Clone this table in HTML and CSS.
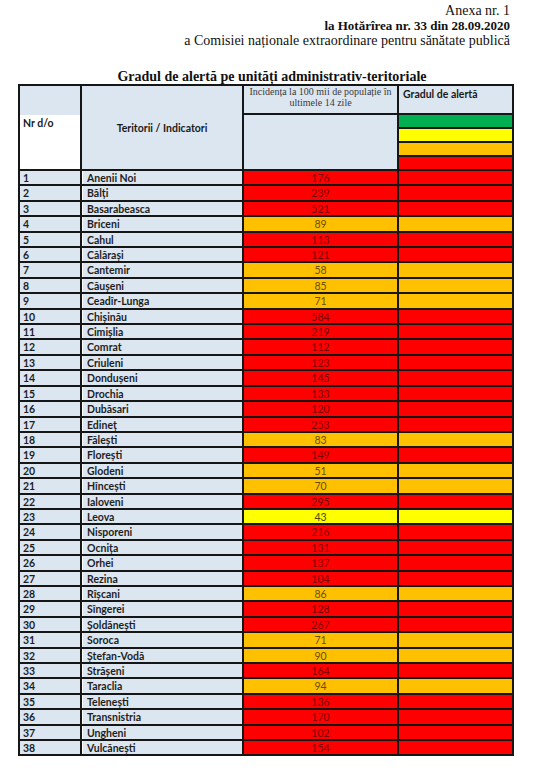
FILE: index.html
```html
<!DOCTYPE html>
<html lang="ro">
<head>
<meta charset="utf-8">
<title>Anexa nr. 1</title>
<link rel="stylesheet" href="styles.css">
</head>
<body>
<div class="page">
  <div class="annex">
    <div>Anexa nr. 1</div>
    <div class="b">la Hotărîrea nr. 33 din 28.09.2020</div>
    <div>a Comisiei naționale extraordinare pentru sănătate publică</div>
  </div>
  <h1 class="title">Gradul de alertă pe unități administrativ-teritoriale</h1>
  <div class="grid">
    <div class="h-nr"><span>Nr d/o</span></div>
    <div class="h-ter">Teritorii / Indicatori</div>
    <div class="h-inc">Incidența la 100 mii de populație în<br>ultimele 14 zile</div>
    <div class="h-grad">Gradul de alertă</div>
    <div class="h-inc2"></div>
    <div class="lv green"></div>
    <div class="lv yellow"></div>
    <div class="lv orange"></div>
    <div class="lv red"></div>

    <div class="nr">1</div><div class="nm">Anenii Noi</div><div class="val r">176</div><div class="al r"></div>
    <div class="nr">2</div><div class="nm">Bălți</div><div class="val r">239</div><div class="al r"></div>
    <div class="nr">3</div><div class="nm">Basarabeasca</div><div class="val r">521</div><div class="al r"></div>
    <div class="nr">4</div><div class="nm">Briceni</div><div class="val o">89</div><div class="al o"></div>
    <div class="nr">5</div><div class="nm">Cahul</div><div class="val r">113</div><div class="al r"></div>
    <div class="nr">6</div><div class="nm">Călărași</div><div class="val r">121</div><div class="al r"></div>
    <div class="nr">7</div><div class="nm">Cantemir</div><div class="val o">58</div><div class="al o"></div>
    <div class="nr">8</div><div class="nm">Căușeni</div><div class="val o">85</div><div class="al o"></div>
    <div class="nr">9</div><div class="nm">Ceadîr-Lunga</div><div class="val o">71</div><div class="al o"></div>
    <div class="nr">10</div><div class="nm">Chișinău</div><div class="val r">584</div><div class="al r"></div>
    <div class="nr">11</div><div class="nm">Cimișlia</div><div class="val r">219</div><div class="al r"></div>
    <div class="nr">12</div><div class="nm">Comrat</div><div class="val r">112</div><div class="al r"></div>
    <div class="nr">13</div><div class="nm">Criuleni</div><div class="val r">123</div><div class="al r"></div>
    <div class="nr">14</div><div class="nm">Dondușeni</div><div class="val r">145</div><div class="al r"></div>
    <div class="nr">15</div><div class="nm">Drochia</div><div class="val r">133</div><div class="al r"></div>
    <div class="nr">16</div><div class="nm">Dubăsari</div><div class="val r">120</div><div class="al r"></div>
    <div class="nr">17</div><div class="nm">Edineț</div><div class="val r">253</div><div class="al r"></div>
    <div class="nr">18</div><div class="nm">Fălești</div><div class="val o">83</div><div class="al o"></div>
    <div class="nr">19</div><div class="nm">Florești</div><div class="val r">149</div><div class="al r"></div>
    <div class="nr">20</div><div class="nm">Glodeni</div><div class="val o">51</div><div class="al o"></div>
    <div class="nr">21</div><div class="nm">Hîncești</div><div class="val o">70</div><div class="al o"></div>
    <div class="nr">22</div><div class="nm">Ialoveni</div><div class="val r">295</div><div class="al r"></div>
    <div class="nr">23</div><div class="nm">Leova</div><div class="val y">43</div><div class="al y"></div>
    <div class="nr">24</div><div class="nm">Nisporeni</div><div class="val r">216</div><div class="al r"></div>
    <div class="nr">25</div><div class="nm">Ocnița</div><div class="val r">131</div><div class="al r"></div>
    <div class="nr">26</div><div class="nm">Orhei</div><div class="val r">137</div><div class="al r"></div>
    <div class="nr">27</div><div class="nm">Rezina</div><div class="val r">104</div><div class="al r"></div>
    <div class="nr">28</div><div class="nm">Rîșcani</div><div class="val o">86</div><div class="al o"></div>
    <div class="nr">29</div><div class="nm">Sîngerei</div><div class="val r">128</div><div class="al r"></div>
    <div class="nr">30</div><div class="nm">Șoldănești</div><div class="val r">267</div><div class="al r"></div>
    <div class="nr">31</div><div class="nm">Soroca</div><div class="val o">71</div><div class="al o"></div>
    <div class="nr">32</div><div class="nm">Ștefan-Vodă</div><div class="val o">90</div><div class="al o"></div>
    <div class="nr">33</div><div class="nm">Strășeni</div><div class="val r">164</div><div class="al r"></div>
    <div class="nr">34</div><div class="nm">Taraclia</div><div class="val o">94</div><div class="al o"></div>
    <div class="nr">35</div><div class="nm">Telenești</div><div class="val r">136</div><div class="al r"></div>
    <div class="nr">36</div><div class="nm">Transnistria</div><div class="val r">170</div><div class="al r"></div>
    <div class="nr">37</div><div class="nm">Ungheni</div><div class="val r">102</div><div class="al r"></div>
    <div class="nr">38</div><div class="nm">Vulcănești</div><div class="val r">154</div><div class="al r"></div>
  </div>
</div>
</body>
</html>
```

FILE: styles.css
```css
html, body {
  margin: 0;
  padding: 0;
  background: #fff;
}

.page {
  width: 536px;
  padding-top: 3px;
  font-family: "Liberation Serif", "Times New Roman", serif;
  color: #111;
}

.annex {
  text-align: right;
  padding-right: 26px;
  font-size: 14px;
  line-height: 15px;
}

.annex .b {
  font-weight: bold;
  font-size: 13px;
}

.title {
  margin: 22px 0 0;
  padding-left: 8px;
  font-size: 14px;
  line-height: 14px;
  font-weight: bold;
  text-align: center;
  color: #111;
}

.grid {
  margin-left: 18px;
  width: 496px;
  box-sizing: border-box;
  display: grid;
  grid-template-columns: 60px 160px 153px 113px;
  grid-template-rows: 27px 12px 12px 12px 12px repeat(38, 13.42px);
  gap: 2px;
  padding: 2px;
  background: #161616;
  font-family: Lato, "Open Sans", sans-serif;
  font-size: 10.5px;
}

.grid > div {
  overflow: hidden;
  white-space: nowrap;
}

.h-nr {
  grid-column: 1;
  grid-row: 1 / 6;
  background: linear-gradient(#dce6f1 0 29px, #fff 29px);
  display: flex;
  align-items: center;
  padding: 0 0 9px 3px;
  font-weight: bold;
  color: #1a1a1a;
}

.h-ter {
  grid-column: 2;
  grid-row: 1 / 6;
  background: #dce6f1;
  display: flex;
  align-items: center;
  justify-content: center;
  font-weight: bold;
  color: #1a1a1a;
}

.h-inc {
  grid-column: 3;
  grid-row: 1;
  background: #dce6f1;
  font-family: "Liberation Serif", "Times New Roman", serif;
  font-size: 10px;
  line-height: 10.5px;
  text-align: center;
  padding-top: 1px;
  color: #3a3a3a;
}

.h-inc2 {
  grid-column: 3;
  grid-row: 2 / 6;
  background: #dce6f1;
}

.h-grad {
  grid-column: 4;
  grid-row: 1;
  background: #dce6f1;
  font-weight: bold;
  padding: 2px 0 0 4px;
  line-height: 12px;
  color: #1a1a1a;
}

.lv { grid-column: 4; }
.green { background: #00b050; }
.yellow { background: #ffff00; }
.orange { background: #ffc000; }
.red { background: #ff0000; }

.nr, .nm {
  background: #dce6f1;
  font-weight: bold;
  color: #1e1e1e;
  line-height: 13.42px;
  padding-top: 1px;
  box-sizing: border-box;
}

.nr {
  padding-left: 3px;
}

.nm {
  padding-left: 5px;
  box-shadow: inset 1px 0 #fff;
}

.val {
  text-align: center;
  line-height: 13.42px;
  padding-top: 1px;
  box-sizing: border-box;
}

.r { background: #ff0000; }
.o { background: #ffc000; }
.y { background: #ffff00; }

.val.r { color: #7a0000; }
.val.o { color: #6a4e00; }
.val.y { color: #4d4800; }
```
